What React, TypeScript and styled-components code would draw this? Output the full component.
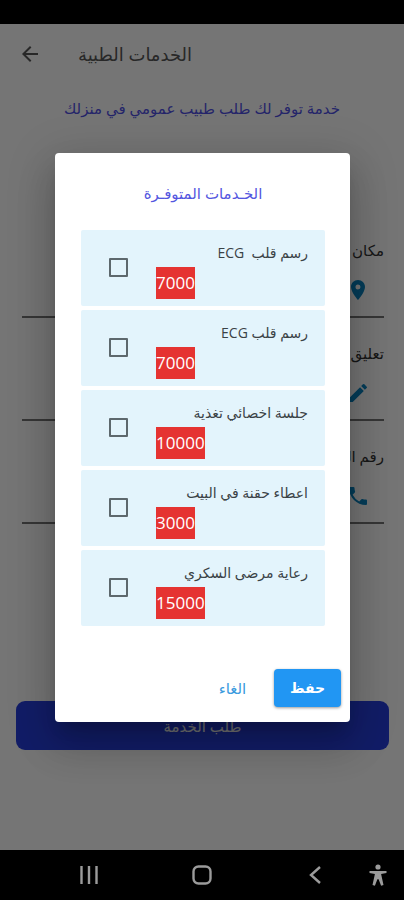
import React, { useState } from "react";
import styled, { createGlobalStyle } from "styled-components";

const GlobalStyle = createGlobalStyle`
  *, *::before, *::after { box-sizing: border-box; }
  body {
    margin: 0;
    background: #000;
    font-family: "Open Sans", "DejaVu Sans", sans-serif;
  }
  button, input { font: inherit; }
`;

const Screen = styled.div`
  display: flex;
  flex-direction: column;
  min-height: 100vh;
  background: #000;
`;

const StatusBar = styled.div`
  height: 24px;
`;

const Page = styled.main`
  position: relative;
  flex: 1;
  display: flex;
  flex-direction: column;
  background: #fff;
`;

const AppBar = styled.header`
  display: flex;
  align-items: center;
  gap: 36px;
  height: 60px;
  padding: 0 18px;
  color: #585858;
`;

const IconButton = styled.button`
  display: flex;
  align-items: center;
  justify-content: center;
  padding: 0;
  border: 0;
  background: none;
  color: inherit;
`;

const PageTitle = styled.h1`
  margin: 0;
  font-size: 18px;
  font-weight: 400;
  line-height: 28px;
`;

const Intro = styled.p`
  margin: 10px 0 0;
  color: #4f50e6;
  font-size: 15px;
  font-weight: 500;
  line-height: 28px;
  text-align: center;
`;

const Fields = styled.form`
  display: flex;
  flex-direction: column;
  gap: 10px;
  padding: 103px 20px 0 22px;
`;

const Field = styled.div`
  display: flex;
  flex-direction: column;
  height: 93px;
  border-bottom: 2px solid #777;
`;

const FieldLabel = styled.label`
  height: 46px;
  color: #333;
  font-size: 15px;
  line-height: 50px;
`;

const FieldEntry = styled.div`
  display: flex;
  align-items: center;
  gap: 8px;
  height: 38px;
  padding-right: 14px;
  color: #0c86c2;
`;

const FieldInput = styled.input`
  flex: 1;
  min-width: 0;
  border: 0;
  outline: 0;
  background: none;
`;

const RequestButton = styled.button`
  height: 49px;
  margin: auto 15px 100px 16px;
  border: 0;
  border-radius: 9px;
  background: #2940e0;
  color: #fff;
  font-size: 15px;
  font-weight: 500;
`;

const Scrim = styled.div`
  position: absolute;
  inset: 0;
  display: flex;
  align-items: center;
  justify-content: center;
  padding: 0 54px 0 55px;
  background: rgba(0, 0, 0, 0.54);
`;

const Dialog = styled.section`
  flex: 1;
  display: flex;
  flex-direction: column;
  padding: 26px 9px 15px 26px;
  border-radius: 4px;
  background: #fff;
  box-shadow: 0 11px 15px -7px rgba(0, 0, 0, 0.2),
    0 24px 38px 3px rgba(0, 0, 0, 0.14), 0 9px 46px 8px rgba(0, 0, 0, 0.12);
`;

const DialogTitle = styled.h2`
  margin: 0 16px 23px 0;
  color: #5356e0;
  font-size: 15px;
  font-weight: 400;
  line-height: 28px;
  text-align: center;
`;

const ServiceList = styled.ul`
  display: flex;
  flex-direction: column;
  gap: 4px;
  margin: 0 16px 0 0;
  padding: 0;
  list-style: none;
`;

const ServiceRow = styled.label`
  display: flex;
  align-items: center;
  gap: 28px;
  height: 76px;
  padding: 0 17px 0 28px;
  border-radius: 2px;
  background: #e3f4fc;
`;

const Tick = styled.input`
  appearance: none;
  flex: none;
  width: 19px;
  height: 19px;
  margin: 0;
  border: 2px solid #5d686d;
  border-radius: 1px;
  &:checked { background: #2196f3; }
`;

const ServiceText = styled.span`
  flex: 1;
  display: flex;
  flex-direction: column;
  align-items: flex-end;
  padding-top: 2px;
`;

const ServiceName = styled.span`
  align-self: flex-start;
  color: #3a4246;
  font-size: 14px;
  line-height: 28px;
  white-space: pre;
`;

const Price = styled.span`
  background: #e53331;
  color: #fff;
  font-family: "Open Sans", sans-serif;
  font-size: 17px;
  font-weight: 500;
  line-height: 32px;
`;

const Actions = styled.div`
  display: flex;
  gap: 8px;
  margin-top: 43px;
`;

const ActionButton = styled.button<{ $primary?: boolean }>`
  width: 67px;
  height: 38px;
  padding: 0;
  border: 0;
  border-radius: 4px;
  background: ${(p) => (p.$primary ? "#2196f3" : "transparent")};
  color: ${(p) => (p.$primary ? "#fff" : "#3a9ade")};
  box-shadow: ${(p) => (p.$primary ? "0 1px 3px rgba(0, 0, 0, 0.4)" : "none")};
  font-size: ${(p) => (p.$primary ? "14px" : "15px")};
  font-weight: ${(p) => (p.$primary ? 700 : 400)};
`;

const NavBar = styled.nav`
  display: grid;
  grid-template-columns: 1fr 1fr 1fr 14px;
  align-items: center;
  justify-items: center;
  height: 50px;
  padding: 0 19px 0 33px;
  color: #9b9b9b;
`;

const services = [
  { name: "رسم قلب  ECG", price: "7000" },
  { name: "رسم قلب ECG", price: "7000" },
  { name: "جلسة اخصائي تغذية", price: "10000" },
  { name: "اعطاء حقنة في البيت", price: "3000" },
  { name: "رعاية مرضى السكري", price: "15000" },
];

const PinIcon = () => (
  <svg width="24" height="24" viewBox="0 0 24 24" fill="currentColor" aria-hidden="true">
    <path d="M12 2C8.13 2 5 5.13 5 9c0 5.25 7 13 7 13s7-7.75 7-13c0-3.87-3.13-7-7-7zm0 9.5a2.5 2.5 0 1 1 0-5 2.5 2.5 0 0 1 0 5z" />
  </svg>
);

const PencilIcon = () => (
  <svg width="24" height="24" viewBox="0 0 24 24" fill="currentColor" aria-hidden="true">
    <path d="M3 17.25V21h3.75L17.81 9.94l-3.75-3.75L3 17.25zM20.71 7.04a1 1 0 0 0 0-1.41l-2.34-2.34a1 1 0 0 0-1.41 0l-1.83 1.83 3.75 3.75 1.83-1.83z" />
  </svg>
);

const PhoneIcon = () => (
  <svg width="24" height="24" viewBox="0 0 24 24" fill="currentColor" aria-hidden="true">
    <path d="M6.62 10.79a15.05 15.05 0 0 0 6.59 6.59l2.2-2.2a1 1 0 0 1 1.01-.24c1.12.37 2.33.57 3.58.57a1 1 0 0 1 1 1V20a1 1 0 0 1-1 1C10.61 21 3 13.39 3 4a1 1 0 0 1 1-1h3.5a1 1 0 0 1 1 1c0 1.25.2 2.45.57 3.57a1 1 0 0 1-.25 1.02l-2.2 2.2z" />
  </svg>
);

const fields = [
  { id: "place", label: "مكان السكن", icon: <PinIcon /> },
  { id: "comment", label: "تعليق", icon: <PencilIcon /> },
  { id: "phone", label: "رقم الهاتف", icon: <PhoneIcon /> },
];

export default function App() {
  const [chosen, setChosen] = useState<number[]>([]);
  const toggle = (index: number) =>
    setChosen((list) =>
      list.includes(index) ? list.filter((i) => i !== index) : [...list, index]
    );

  return (
    <Screen>
      <GlobalStyle />
      <StatusBar />
      <Page>
        <AppBar>
          <IconButton aria-label="رجوع">
            <svg width="24" height="24" viewBox="0 0 24 24" fill="currentColor">
              <path d="M20 11H7.83l5.59-5.59L12 4l-8 8 8 8 1.41-1.41L7.83 13H20v-2z" />
            </svg>
          </IconButton>
          <PageTitle dir="rtl">الخدمات الطبية</PageTitle>
        </AppBar>
        <Intro dir="rtl">خدمة توفر لك طلب طبيب عمومي في منزلك</Intro>
        <Fields dir="rtl">
          {fields.map((field) => (
            <Field key={field.id}>
              <FieldLabel htmlFor={field.id}>{field.label}</FieldLabel>
              <FieldEntry>
                {field.icon}
                <FieldInput id={field.id} />
              </FieldEntry>
            </Field>
          ))}
        </Fields>
        <RequestButton>طلب الخدمة</RequestButton>

        <Scrim>
          <Dialog role="dialog" aria-modal="true" aria-labelledby="dialog-title">
            <DialogTitle id="dialog-title" dir="rtl">الخـدمات المتوفـرة</DialogTitle>
            <ServiceList>
              {services.map((service, index) => (
                <li key={index}>
                  <ServiceRow>
                    <Tick
                      type="checkbox"
                      checked={chosen.includes(index)}
                      onChange={() => toggle(index)}
                    />
                    <ServiceText dir="rtl">
                      <ServiceName>{service.name}</ServiceName>
                      <Price>{service.price}</Price>
                    </ServiceText>
                  </ServiceRow>
                </li>
              ))}
            </ServiceList>
            <Actions dir="rtl">
              <ActionButton $primary>حفظ</ActionButton>
              <ActionButton>الغاء</ActionButton>
            </Actions>
          </Dialog>
        </Scrim>
      </Page>
      <NavBar>
        <IconButton aria-label="التطبيقات الأخيرة">
          <svg width="20" height="20" viewBox="0 0 20 20" stroke="currentColor" strokeWidth="2.4">
            <path d="M2.5 1v18M10 1v18M17.5 1v18" />
          </svg>
        </IconButton>
        <IconButton aria-label="الرئيسية">
          <svg width="20" height="20" viewBox="0 0 20 20" fill="none" stroke="currentColor" strokeWidth="2.4">
            <rect x="1.5" y="1.5" width="17" height="17" rx="5" />
          </svg>
        </IconButton>
        <IconButton aria-label="السابق">
          <svg width="20" height="20" viewBox="0 0 20 20" fill="none" stroke="currentColor" strokeWidth="2.4">
            <path d="M15 2 6 10l9 8" />
          </svg>
        </IconButton>
        <IconButton aria-label="إمكانية الوصول">
          <svg width="20" height="22" viewBox="0 0 20 22" fill="currentColor">
            <circle cx="10" cy="3" r="2.6" />
            <path d="M1.5 7h17v2.1l-5.4 1 2.4 11-2.4.7-2.5-6.6H9.4l-2.5 6.6-2.4-.7 2.4-11-5.4-1z" />
          </svg>
        </IconButton>
      </NavBar>
    </Screen>
  );
}
